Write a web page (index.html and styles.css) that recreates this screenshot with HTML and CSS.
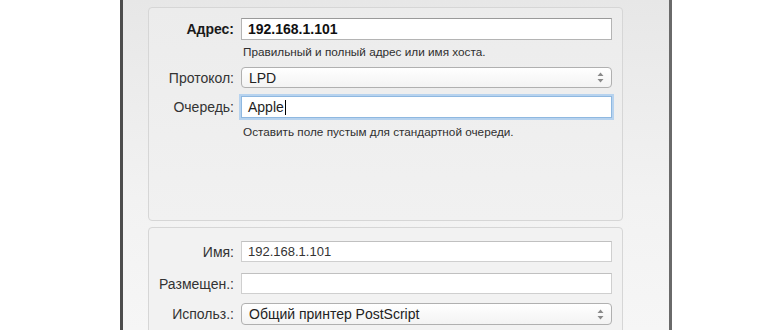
FILE: index.html
```html
<!DOCTYPE html>
<html lang="ru">
<head>
  <meta charset="UTF-8">
  <title>Добавить принтер</title>
  <link rel="stylesheet" href="styles.css">
</head>
<body>
  <div class="window">
    <div class="panel panel-top">
      <div class="row row-addr">
        <div class="label label-bold">Адрес:</div>
        <div class="field field-strong">192.168.1.101</div>
      </div>
      <div class="hint hint-addr">Правильный и полный адрес или имя хоста.</div>
      <div class="row row-proto">
        <div class="label">Протокол:</div>
        <div class="select">
          <span>LPD</span>
          <svg class="arrows" width="7" height="11" viewBox="0 0 7 11"><path d="M3.5 0.5 L6.5 4 L0.5 4 Z M3.5 10.5 L6.5 7 L0.5 7 Z" fill="#8a8a8a"/></svg>
        </div>
      </div>
      <div class="row row-queue">
        <div class="label">Очередь:</div>
        <div class="field field-focus">Apple<span class="caret"></span></div>
      </div>
      <div class="hint hint-queue">Оставить поле пустым для стандартной очереди.</div>
    </div>

    <div class="panel panel-bottom">
      <div class="row row-name">
        <div class="label">Имя:</div>
        <div class="field field-thin">192.168.1.101</div>
      </div>
      <div class="row row-place">
        <div class="label">Размещен.:</div>
        <div class="field field-thin"></div>
      </div>
      <div class="row row-use">
        <div class="label">Использ.:</div>
        <div class="select">
          <span>Общий принтер PostScript</span>
          <svg class="arrows" width="7" height="11" viewBox="0 0 7 11"><path d="M3.5 0.5 L6.5 4 L0.5 4 Z M3.5 10.5 L6.5 7 L0.5 7 Z" fill="#8a8a8a"/></svg>
        </div>
      </div>
    </div>
  </div>
</body>
</html>
```

FILE: styles.css
```css
body {
  margin: 0;
  padding: 0;
  background-color: #ffffff;
  font-family: "Liberation Sans", Arial, sans-serif;
  color: #2b2b2b;
}

.window {
  margin-left: 120px;
  width: 521px;
  height: 323px;
  overflow: hidden;
  background: linear-gradient(#e7e7e7, #f2f2f2 60%, #f6f6f6);
  border-left: 3px solid #4d4d4d;
  border-right: 3px solid #6a6a6a;
  padding: 7px 0 0 25px;
}

.panel {
  width: 473px;
  background-color: #efefef;
  border: 1px solid #d6d6d6;
  border-radius: 4px;
}

.panel-top {
  height: 202px;
  padding-top: 10px;
  background: linear-gradient(#ececec, #f1f1f1);
}

.panel-bottom {
  margin-top: 6px;
  height: 120px;
  padding-top: 13px;
  background-color: #f2f2f2;
}

.row {
  display: flex;
  align-items: center;
}

.label {
  width: 85px;
  margin-right: 7px;
  text-align: right;
  font-size: 14px;
  color: #333333;
  white-space: nowrap;
}

.label-bold {
  font-weight: bold;
  color: #1a1a1a;
}

.field {
  width: 371px;
  height: 22px;
  box-sizing: border-box;
  background-color: #ffffff;
  border: 1px solid #b4b4b4;
  border-top-color: #9a9a9a;
  padding-left: 6px;
  font-size: 14px;
  line-height: 20px;
  color: #1e1e1e;
  display: flex;
  align-items: center;
}

.field-strong {
  font-weight: bold;
  color: #111111;
}

.field-thin {
  height: 21px;
  border-color: #cfcfcf;
  border-top-color: #c0c0c0;
  font-size: 13px;
  color: #333333;
}

.field-focus {
  border: 1px solid #8fb8e0;
  box-shadow: 0 0 0 2px #b7d3ef;
}

.caret {
  display: inline-block;
  width: 1px;
  height: 15px;
  background-color: #000000;
  margin-left: 1px;
}

.select {
  width: 371px;
  height: 21px;
  box-sizing: border-box;
  border: 1px solid #b0b0b0;
  border-radius: 4px;
  background: linear-gradient(#ffffff, #f3f3f3);
  padding: 0 7px;
  display: flex;
  align-items: center;
  justify-content: space-between;
  font-size: 14px;
  color: #222222;
}

.hint {
  margin-left: 94px;
  font-size: 11.75px;
  line-height: 14px;
  color: #2f2f2f;
}

.hint-addr {
  margin-top: 5px;
}

.row-proto {
  margin-top: 8px;
}

.row-queue {
  margin-top: 8px;
}

.hint-queue {
  margin-top: 7px;
}

.row-place {
  margin-top: 11px;
}

.row-use {
  margin-top: 9px;
}

.row-use .select {
  height: 22px;
}
```
